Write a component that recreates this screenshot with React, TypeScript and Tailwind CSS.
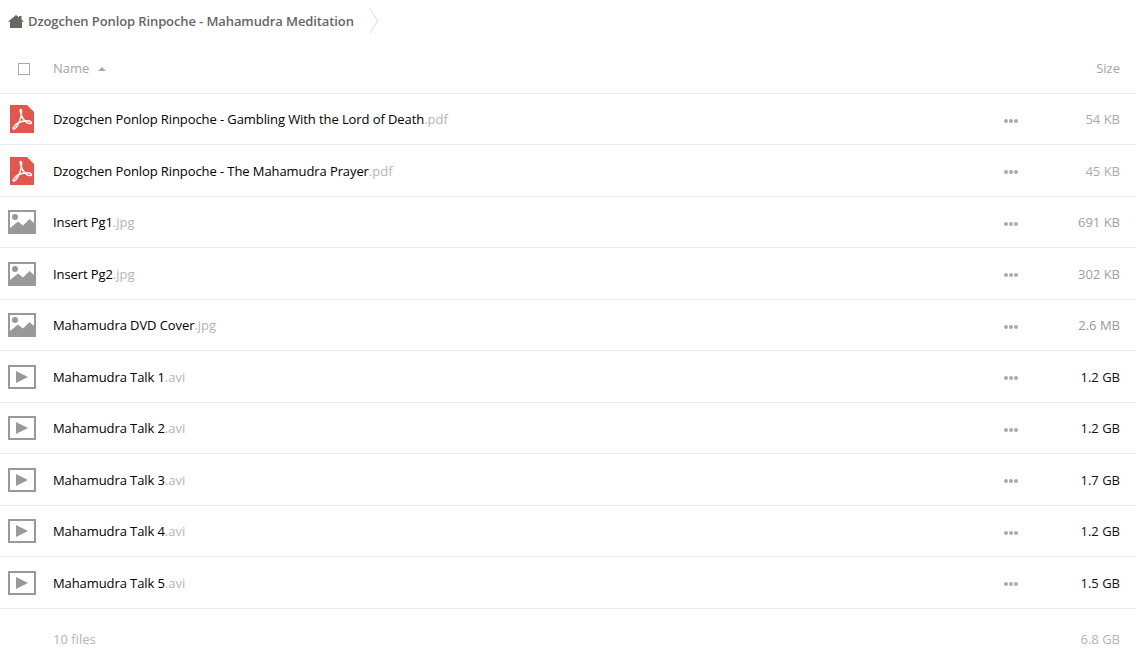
const FILES = [
  { name: "Dzogchen Ponlop Rinpoche - Gambling With the Lord of Death", ext: ".pdf", size: "54 KB", kind: "pdf", color: "#aaaaaa" },
  { name: "Dzogchen Ponlop Rinpoche - The Mahamudra Prayer", ext: ".pdf", size: "45 KB", kind: "pdf", color: "#aaaaaa" },
  { name: "Insert Pg1", ext: ".jpg", size: "691 KB", kind: "image", color: "#a0a0a0" },
  { name: "Insert Pg2", ext: ".jpg", size: "302 KB", kind: "image", color: "#a0a0a0" },
  { name: "Mahamudra DVD Cover", ext: ".jpg", size: "2.6 MB", kind: "image", color: "#999999" },
  { name: "Mahamudra Talk 1", ext: ".avi", size: "1.2 GB", kind: "video", color: "#111111" },
  { name: "Mahamudra Talk 2", ext: ".avi", size: "1.2 GB", kind: "video", color: "#111111" },
  { name: "Mahamudra Talk 3", ext: ".avi", size: "1.7 GB", kind: "video", color: "#111111" },
  { name: "Mahamudra Talk 4", ext: ".avi", size: "1.2 GB", kind: "video", color: "#111111" },
  { name: "Mahamudra Talk 5", ext: ".avi", size: "1.5 GB", kind: "video", color: "#111111" },
];

function PdfIcon() {
  return (
    <svg width="24" height="28" viewBox="0 0 24 28" className="ml-[10px]">
      <path d="M0 0H17L24 7V28H0Z" fill="#e2574c" />
      <path
        d="M10.5 4.5C9.8 4.8 10.4 9 13 13.5C15 17 18.5 19.2 21 18.3C22.3 17.6 20.5 15.6 16.5 15.8C11 16.2 5.5 18.2 3.4 22.5C2.6 24.2 4 24.6 5.4 23.2C8.5 20.2 11.8 12 11.6 6.5C11.6 5 11.2 4.2 10.5 4.5Z"
        fill="none"
        stroke="#ffffff"
        strokeWidth="1.5"
      />
    </svg>
  );
}

function ImageIcon() {
  return (
    <svg width="28" height="24" viewBox="0 0 28 24" className="ml-2">
      <path d="M0 0H28V24H0Z" fill="#999999" />
      <path d="M2 2H26V13L21.5 9L15 15.5L10 11.5L2 18Z" fill="#ffffff" />
      <circle cx="7" cy="7" r="3" fill="#999999" />
    </svg>
  );
}

function VideoIcon() {
  return (
    <svg width="28" height="24" viewBox="0 0 28 24" className="ml-2">
      <rect x="1" y="1" width="26" height="22" fill="#ffffff" stroke="#999999" strokeWidth="2" />
      <path d="M8 6V18L20 12Z" fill="#999999" />
    </svg>
  );
}

function FileIcon({ kind }: { kind: string }) {
  if (kind === "pdf") return <PdfIcon />;
  if (kind === "image") return <ImageIcon />;
  return <VideoIcon />;
}

export default function App() {
  return (
    <div className="w-[1136px] h-[658px] overflow-hidden bg-white font-['Open_Sans',sans-serif] text-[13px]">
      {/* Breadcrumb */}
      <div className="h-[42px] flex items-center pl-2">
        <svg width="16" height="13" viewBox="0 0 16 13">
          <path d="M8 0L11 2.4V1H13.5V4.4L16 6.7H14V13H2V6.7H0Z" fill="#666666" />
        </svg>
        <span className="ml-1 mt-0.5 font-semibold text-[#666666] tracking-[-0.105px]">
          Dzogchen Ponlop Rinpoche - Mahamudra Meditation
        </span>
        <svg width="10" height="26" viewBox="0 0 10 26" className="ml-[15px]">
          <path d="M1 0.5L8.5 13L1 25.5" fill="none" stroke="#dddddd" />
        </svg>
      </div>

      {/* Header */}
      <div className="h-[51.5px] flex items-center border-b border-[#ededed] pt-[3px]">
        <div className="w-[53px] pl-[18px]">
          <div className="size-3 border border-[#aaaaaa] bg-white" />
        </div>
        <span className="text-[#a5a5a5]">Name</span>
        <svg width="8" height="4" viewBox="0 0 8 4" className="ml-[9px]">
          <path d="M0 4L4 0L8 4Z" fill="#aaaaaa" />
        </svg>
        <span className="ml-auto mr-4 text-[#a5a5a5]">Size</span>
      </div>

      {/* Rows */}
      {FILES.map((f) => (
        <div key={f.name} className="h-[51.5px] flex items-center border-b border-[#ededed] pt-px">
          <div className="w-[53px] shrink-0 flex">
            <FileIcon kind={f.kind} />
          </div>
          <span className="mt-px text-black tracking-[-0.09px]">{f.name}</span>
          <span className="mt-px text-[#b5b5b5]">{f.ext}</span>
          <div className="ml-auto flex gap-px mt-[3px]">
            <span className="size-1 rounded-full bg-[#aaaaaa]" />
            <span className="size-1 rounded-full bg-[#aaaaaa]" />
            <span className="size-1 rounded-full bg-[#aaaaaa]" />
          </div>
          <span className="mt-px w-[102px] mr-4 text-right" style={{ color: f.color }}>
            {f.size}
          </span>
        </div>
      ))}

      {/* Summary */}
      <div className="h-[50px] flex items-center pl-[53px] pr-4 pt-[13px] text-[#b5b5b5]">
        <span>10 files</span>
        <span className="ml-auto">6.8 GB</span>
      </div>
    </div>
  );
}
